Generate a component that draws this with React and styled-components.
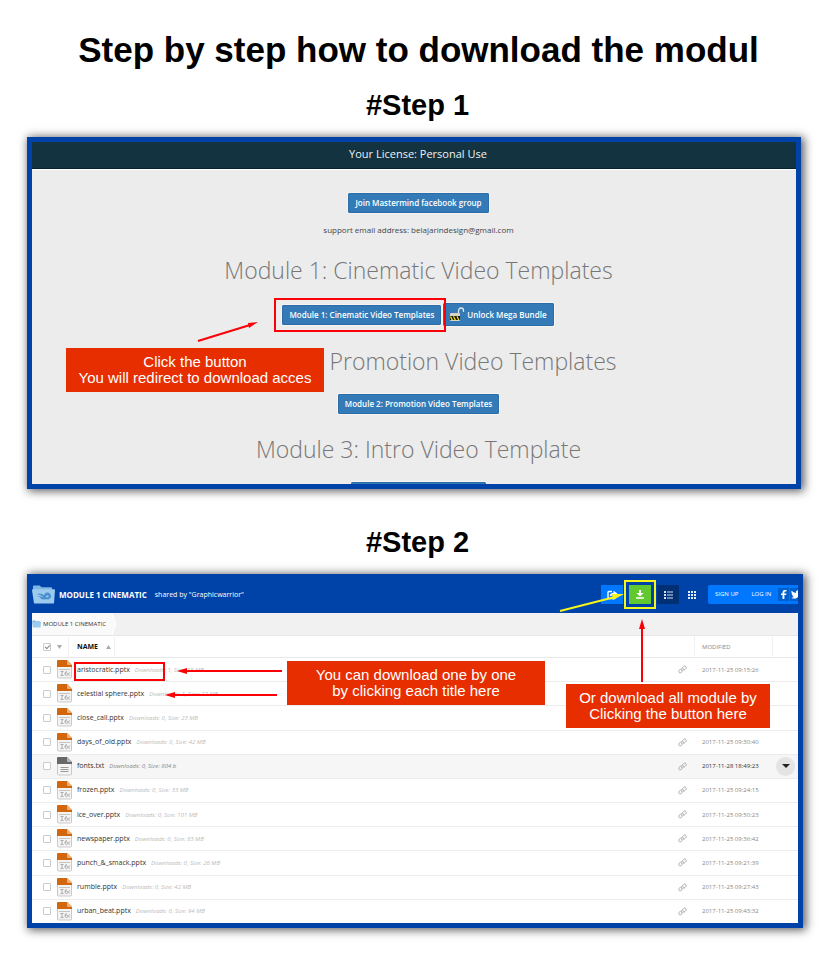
import React from "react";
import styled, { createGlobalStyle } from "styled-components";

const GlobalStyle = createGlobalStyle`
  * { box-sizing: border-box; }
  body { margin: 0; background: #fff; }
  button { font: inherit; color: inherit; border: 0; padding: 0; background: none; cursor: pointer; }
  a { color: inherit; text-decoration: none; }
`;

const sans = `"Open Sans", "Noto Sans", sans-serif`;
const arial = `"Liberation Sans", Arial, sans-serif`;

const Page = styled.main`
  padding: 26px 26px 31px 27px;
  font-family: ${arial};
  color: #000;
`;

const Title = styled.h1`
  margin: 0 0 0 7px;
  font-size: 35px;
  line-height: 48px;
  font-weight: 700;
  text-align: center;
`;

const StepTitle = styled.h2`
  margin: ${(p) => p.$top}px 0 ${(p) => p.$bottom}px 5px;
  font-size: 29px;
  line-height: 34px;
  font-weight: 700;
  text-align: center;
`;

const Frame = styled.section`
  position: relative;
  margin-right: ${(p) => p.$inset || 0}px;
  border: 5px solid #0043a8;
  background: ${(p) => p.$bg};
  box-shadow: 2px 1px 9px 1px rgba(0, 0, 0, 0.65);
  font-family: ${sans};
`;

/* ---------- step 1 ---------- */

const Screen = styled.div`
  height: 342px;
  overflow: hidden;
`;

const LicenseBar = styled.header`
  height: 28px;
  padding-left: 8px;
  background: #133340;
  border-bottom: 1px solid #fff;
  box-shadow: inset 0 -1px 0 #08222d;
  color: #eef2f4;
  font-size: 11px;
  line-height: 24px;
  text-align: center;
`;

const Modules = styled.div`
  display: flex;
  flex-direction: column;
  align-items: center;
  padding: 23px 0 0 9px;
`;

const BlueButton = styled.button`
  display: flex;
  align-items: center;
  gap: 2px;
  height: ${(p) => (p.$tall ? 23 : 20)}px;
  padding: 0 7px;
  border-radius: 2px;
  background: #337ab7;
  box-shadow: inset 0 0 0 1px #2a6da8, 0 0 0 1px #f6f3f0;
  color: #fff;
  font-size: 8px;
  font-weight: 600;
  line-height: 20px;
  white-space: nowrap;
`;

const Support = styled.p`
  margin: 8px 0 0;
  color: #444;
  font-size: 8px;
  line-height: 18px;
`;

const ModuleTitle = styled.h3`
  margin: ${(p) => p.$top}px 0 ${(p) => p.$bottom}px;
  color: #777;
  font-size: 23px;
  font-weight: 300;
  line-height: 32px;
  white-space: nowrap;
`;

const ButtonRow = styled.div`
  display: flex;
  align-items: center;
  margin-right: 9px;
`;

const Highlight = styled.span`
  z-index: 1;
  margin: -6px -3px -6px 0;
  padding: 5px 3px 5px 6px;
  border: 2px solid #fb0007;
`;

/* ---------- annotations ---------- */

const Callout = styled.p`
  position: absolute;
  top: ${(p) => p.$top}px;
  left: ${(p) => (p.$left === undefined ? "auto" : `${p.$left}px`)};
  right: ${(p) => (p.$right === undefined ? "auto" : `${p.$right}px`)};
  width: ${(p) => p.$width}px;
  margin: 0;
  padding: 6px 0;
  background: #e72e00;
  color: #fff;
  font-family: ${arial};
  font-size: 15px;
  line-height: 16px;
  text-align: center;
  white-space: nowrap;
`;

const Arrow = styled.svg`
  position: absolute;
  top: ${(p) => p.$top}px;
  left: ${(p) => (p.$left === undefined ? "auto" : `${p.$left}px`)};
  right: ${(p) => (p.$right === undefined ? "auto" : `${p.$right}px`)};
  pointer-events: none;
`;

/* ---------- step 2 ---------- */

const FileScreen = styled.div`
  height: 344px;
  overflow: hidden;
`;

const TopBar = styled.header`
  display: flex;
  align-items: center;
  height: 34px;
  padding-bottom: 3px;
  overflow: hidden;
  background: #0043a8;
  color: #fff;
`;

const FolderName = styled.h3`
  margin: 0 8px 0 4px;
  font-size: 8px;
  font-weight: 700;
  line-height: 16px;
  white-space: nowrap;
`;

const SharedBy = styled.span`
  flex: 1;
  font-size: 7px;
  line-height: 16px;
  white-space: nowrap;
`;

const Tool = styled.button`
  display: grid;
  place-items: center;
  flex: none;
  width: 22px;
  height: 19px;
  margin-right: ${(p) => p.$gap || 0}px;
  background: ${(p) => p.$bg || "transparent"};
  outline: ${(p) => (p.$marked ? "2px solid #f8f51c" : "none")};
  outline-offset: 3px;
`;

const Account = styled.div`
  display: flex;
  align-items: center;
  flex: none;
  width: 90px;
  height: 19px;
  padding-left: 7px;
  overflow: hidden;
  border-radius: 2px 0 0 2px;
  background: #0077ff;
  font-size: 6px;
  line-height: 19px;
  white-space: nowrap;
`;

const AccountLink = styled.a`
  flex: none;
  margin-right: ${(p) => p.$gap}px;
`;

const Social = styled.a`
  display: grid;
  place-items: center;
  flex: none;
  width: 11px;
  height: 13px;
  margin-right: 1px;
  background: #005fcc;
`;

const Breadcrumb = styled.nav`
  display: flex;
  height: 23px;
  background: #f1f1f1;
  border-bottom: 1px solid #e6e6e6;
`;

const Crumb = styled.a`
  display: flex;
  align-items: center;
  gap: 2px;
  padding-right: 6px;
  background: #fafafa;
  color: #333;
  font-size: 6px;
`;

const FileTable = styled.table`
  width: 100%;
  height: 288px;
  table-layout: fixed;
  border-collapse: separate;
  border-spacing: 0;
  color: #444;
`;

const Col = styled.col`
  width: ${(p) => (p.$w ? `${p.$w}px` : "auto")};
`;

const HeadCell = styled.th`
  height: 22px;
  padding: 0 0 0 ${(p) => p.$pad || 0}px;
  border-bottom: 1px solid #e8e8e8;
  border-left: ${(p) => (p.$line ? "1px solid #f1f1f1" : "none")};
  color: #888;
  font-size: 6px;
  font-weight: 400;
  line-height: 10px;
  text-align: left;
`;

const NameHead = styled.div`
  display: flex;
  align-items: center;
  height: 20px;
`;

const NameSort = styled.button`
  display: flex;
  align-items: center;
  gap: 8px;
  height: 20px;
  margin-left: 6px;
  padding: 0 3px 0 8px;
  border: solid #f1f1f1;
  border-width: 0 1px;
  color: #111;
  font-size: 7px;
  font-weight: 700;
`;

const Row = styled.tr`
  background: ${(p) => (p.$active ? "#f6f6f6" : "#fff")};
`;

const Cell = styled.td`
  padding: 0 0 0 ${(p) => p.$pad || 0}px;
  border-bottom: 1px solid #ececec;
  color: ${(p) => (p.$active ? "#333" : "#888")};
  font-size: 6px;
  line-height: 10px;
  white-space: nowrap;
  vertical-align: middle;
`;

const Tick = styled.input`
  display: grid;
  place-items: center;
  appearance: none;
  width: 8px;
  height: 8px;
  margin: 0;
  border: 1px solid #c8cbd0;
  border-radius: 1px;
  background: #fff;
  &:checked::before {
    content: "";
    width: 4px;
    height: 2px;
    border: solid #888;
    border-width: 0 0 1px 1px;
    transform: rotate(-45deg);
  }
`;

const FileCell = styled.div`
  display: flex;
  align-items: center;
  height: 22px;
`;

const FileName = styled.a`
  margin: 0 5px;
  color: #333;
  font-size: 7px;
  line-height: 12px;
`;

const Meta = styled.em`
  color: ${(p) => (p.$active ? "#888" : "#bbb")};
  font-size: 6px;
  line-height: 12px;
`;

const MenuButton = styled.button`
  display: grid;
  place-items: center;
  width: 19px;
  height: 19px;
  border-radius: 50%;
  background: #e4e4e4;
`;

const Glyph = styled.svg`
  display: block;
  flex: none;
`;

const LockIcon = () => (
  <Glyph width="15" height="17" viewBox="0 0 15 17" aria-hidden="true">
    <path d="M8.500 8V5.500Q8.500 2 11 2t2.500 2.500V6" fill="none" stroke="#dfe6ea" strokeWidth="1.300" />
    <rect x="0" y="7" width="10" height="8" rx="1" fill="#d8d3c4" />
    <rect x="0" y="10" width="10" height="4" fill="#151508" />
    <path d="M1 10l2 4H1.500L0 11zM4 10l2 4H4.500L3 10.500zM7.500 10l2 4H8L6.500 10.500z" fill="#f5df1f" />
  </Glyph>
);

const FolderIcon = ({ logo, width, height }) => (
  <Glyph width={width} height={height} viewBox="0 0 24 21" aria-hidden="true">
    <path d="M1 4V2q0-1 1-1h6l2 2h10q1 0 1 1v2H1z" fill="#7fb5e2" />
    <path d="M0 6q0-1 1-1h22q1 0 1 1l-1 13q0 1-1 1H3q-1 0-1-1z" fill="#9ccbee" />
    {logo && (
      <path
        d="M5 10.500c3-2 5-.5 7 .5 1.500.7 1-2.500 4-2.500 2.500 0 4 2 3.800 4S17.500 16 15.500 15.500c-2-.5-2.500.5-4.500 0s-2-2.500-5-3c3-.5 4 1 6 .8-2-1-3-3-7-2.800zM15.500 11.500c-1.500.3-1 2 0 2s2-.5 2-1.200-1-1-2-.8z"
        fill="#4a90cf"
        fillRule="evenodd"
      />
    )}
  </Glyph>
);

const FileIcon = ({ type }) => {
  const text = type === "txt";
  return (
    <Glyph width="15" height="19" viewBox="0 0 15 19" aria-hidden="true">
      <path d="M1 1h9l4.500 4.500V17q0 1-1 1h-12q-1 0-1-1V1.500z" fill="#f4f4f4" stroke="#c9c9c9" />
      <path d="M0 1q0-1 1-1h9l5 5v2H0z" fill={text ? "#686868" : "#d2660c"} />
      <path d="M10 0l5 5h-4q-1 0-1-1z" fill={text ? "#b5b5b5" : "#f4ad70"} />
      {text ? (
        <path d="M3.500 10.500h8M3.500 12.500h8M3.500 14.500h8" stroke="#999" />
      ) : (
        <>
          <path d="M2 9.500h11" stroke="#c4c4c4" />
          <path d="M3.500 11.500h3M5 11.500v4M3.500 15.500h3M10 11.500q-2 0-2 2t1.500 2 1.500-1.200-1.300-1.300-1.700 1M12.500 12.500l-1 1.500 1 1.500" fill="none" stroke="#adadad" />
        </>
      )}
    </Glyph>
  );
};

const LinkIcon = () => (
  <Glyph width="9" height="9" viewBox="0 0 9 9" fill="none" stroke="#aaa" strokeLinecap="round" aria-hidden="true">
    <path d="M3.500 5.500C2.500 4.500 4 3.500 5 2.200S7 .8 7.800 1.500s.4 2-.6 2.800l-1 .8" />
    <path d="M5 3.500c1 1 .2 2-1 3.200S2 8.200 1.200 7.500s-.4-2 .6-2.800l.8-.8" />
  </Glyph>
);

const Triangle = ({ up, color = "#aaa", size = 5 }) => (
  <Glyph width={size} height="4" viewBox="0 0 8 6" preserveAspectRatio="none" aria-hidden="true">
    <path d={up ? "M0 6h8L4 0z" : "M0 0h8L4 6z"} fill={color} />
  </Glyph>
);

const ShareIcon = () => (
  <Glyph width="11" height="10" viewBox="0 0 11 10" fill="none" aria-hidden="true">
    <path d="M5 1.500H2Q1 1.500 1 2.500v5q0 1 1 1h5.500q1 0 1-1V7" stroke="#fff" strokeWidth="1.400" />
    <path d="M3.500 6Q4 3.500 7 3.500" stroke="#fff" strokeWidth="1.600" />
    <path d="M6.500.8L10.500 3.500 6.500 6.200z" fill="#fff" />
  </Glyph>
);

const DownloadIcon = () => (
  <Glyph width="8" height="9" viewBox="0 0 8 9" fill="#fff" aria-hidden="true">
    <path d="M3 0h2v3h2.500L4 6.500.5 3H3zM0 7.200h8v1.500H0z" />
  </Glyph>
);

const ListIcon = () => (
  <Glyph width="9" height="8" viewBox="0 0 9 8" fill="#d5dfed" aria-hidden="true">
    <path d="M0 0h2v2H0zM3 .5h6v1H3zM0 3h2v2H0zM3 3.500h6v1H3zM0 6h2v2H0zM3 6.500h6v1H3z" />
  </Glyph>
);

const GridIcon = () => (
  <Glyph width="8" height="8" viewBox="0 0 8 8" fill="#e5ecf6" aria-hidden="true">
    <path d="M0 0h2v2H0zM3 0h2v2H3zM6 0h2v2H6zM0 3h2v2H0zM3 3h2v2H3zM6 3h2v2H6zM0 6h2v2H0zM3 6h2v2H3zM6 6h2v2H6z" />
  </Glyph>
);

const FacebookIcon = () => (
  <Glyph width="6" height="9" viewBox="0 0 6 9" aria-hidden="true">
    <path d="M1.500 9V5H0V3.400h1.500V2.300Q1.500 0 3.800 0H5.500v1.600H4.300q-.9 0-.9.9v.9h2L5.200 5H3.400v4z" fill="#fff" />
  </Glyph>
);

const TwitterIcon = () => (
  <Glyph width="10" height="9" viewBox="0 0 24 20" aria-hidden="true">
    <path
      d="M24 2.400a10 10 0 0 1-2.800.8A5 5 0 0 0 23.300.5a10 10 0 0 1-3.100 1.200 4.900 4.900 0 0 0-8.400 4.500A14 14 0 0 1 1.700 1.100a4.900 4.900 0 0 0 1.500 6.600A4.900 4.900 0 0 1 1 7.100a4.900 4.900 0 0 0 3.900 4.900 5 5 0 0 1-2.200.1 4.900 4.900 0 0 0 4.600 3.400A10 10 0 0 1 0 17.500 14 14 0 0 0 21.500 5 10 10 0 0 0 24 2.400z"
      fill="#fff"
    />
  </Glyph>
);

const files = [
  ["aristocratic.pptx", "Downloads: 1, Size: 15 MB", "2017-11-25 09:15:26"],
  ["celestial sphere.pptx", "Downloads: 1, Size: 17 MB", ""],
  ["close_call.pptx", "Downloads: 0, Size: 23 MB", ""],
  ["days_of_old.pptx", "Downloads: 0, Size: 42 MB", "2017-11-25 09:30:40"],
  ["fonts.txt", "Downloads: 0, Size: 804 b", "2017-11-28 18:49:23"],
  ["frozen.pptx", "Downloads: 0, Size: 33 MB", "2017-11-25 09:24:15"],
  ["ice_over.pptx", "Downloads: 0, Size: 101 MB", "2017-11-25 09:50:23"],
  ["newspaper.pptx", "Downloads: 0, Size: 83 MB", "2017-11-25 09:36:42"],
  ["punch_&_smack.pptx", "Downloads: 0, Size: 26 MB", "2017-11-25 09:21:39"],
  ["rumble.pptx", "Downloads: 0, Size: 42 MB", "2017-11-25 09:27:43"],
  ["urban_beat.pptx", "Downloads: 0, Size: 94 MB", "2017-11-25 09:43:32"],
];

const FileBox = styled.div`
  position: absolute;
  top: 83px;
  left: 42px;
  width: 91px;
  height: 19px;
  border: 2px solid #fb0007;
  pointer-events: none;
`;

const FileRow = ({ name, meta, date }) => {
  const type = name.split(".").pop();
  const active = type === "txt";
  return (
    <Row $active={active}>
      <Cell $pad={11}>
        <Tick type="checkbox" aria-label={`Select ${name}`} />
      </Cell>
      <Cell>
        <FileCell>
          <FileIcon type={type} />
          <FileName href="#">{name}</FileName>
          <Meta $active={active}>{meta}</Meta>
        </FileCell>
      </Cell>
      <Cell>
        <LinkIcon />
      </Cell>
      <Cell $pad={8} $active={active}>{date}</Cell>
      <Cell $pad={4}>
        {active && (
          <MenuButton aria-label={`Menu for ${name}`}>
            <Triangle color="#222" size={8} />
          </MenuButton>
        )}
      </Cell>
    </Row>
  );
};

export default function App() {
  return (
    <Page>
      <GlobalStyle />
      <Title>Step by step how to download the modul</Title>

      <StepTitle $top={14} $bottom={15}>#Step 1</StepTitle>
      <Frame $inset={2} $bg="#ececec">
        <Screen>
          <LicenseBar>Your License: Personal Use</LicenseBar>
          <Modules>
            <BlueButton>Join Mastermind facebook group</BlueButton>
            <Support>support email address: belajarindesign@gmail.com</Support>
            <ModuleTitle $top={15} $bottom={17}>Module 1: Cinematic Video Templates</ModuleTitle>
            <ButtonRow>
              <Highlight>
                <BlueButton>Module 1: Cinematic Video Templates</BlueButton>
              </Highlight>
              <BlueButton $tall>
                <LockIcon />
                Unlock Mega Bundle
              </BlueButton>
            </ButtonRow>
            <ModuleTitle $top={19} $bottom={17}>Module 2: Promotion Video Templates</ModuleTitle>
            <BlueButton>Module 2: Promotion Video Templates</BlueButton>
            <ModuleTitle $top={19} $bottom={17}>Module 3: Intro Video Template</ModuleTitle>
            <BlueButton>Module 3: Intro Video Template</BlueButton>
          </Modules>
        </Screen>
        <Callout $top={206} $left={34} $width={258}>
          Click the button
          <br />
          You will redirect to download acces
        </Callout>
        <Arrow $top={178} $left={164} width="64" height="24" viewBox="0 0 64 24">
          <path d="M2 21L54 5" stroke="#fb0007" strokeWidth="2" />
          <path d="M62 2L53 8 52 3z" fill="#fb0007" />
        </Arrow>
      </Frame>

      <StepTitle $top={36} $bottom={15}>#Step 2</StepTitle>
      <Frame $bg="#fff">
        <FileScreen>
          <TopBar>
            <FolderIcon logo width={23} height={21} />
            <FolderName>MODULE 1 CINEMATIC</FolderName>
            <SharedBy>shared by "Graphicwarrior"</SharedBy>
            <Tool $bg="#0077ff" $gap={6} aria-label="Share"><ShareIcon /></Tool>
            <Tool $bg="#61c82f" $gap={6} $marked aria-label="Download"><DownloadIcon /></Tool>
            <Tool $bg="#002f74" $gap={2} aria-label="List view"><ListIcon /></Tool>
            <Tool $gap={5} aria-label="Grid view"><GridIcon /></Tool>
            <Account>
              <AccountLink href="#" $gap={13}>SIGN UP</AccountLink>
              <AccountLink href="#" $gap={7}>LOG IN</AccountLink>
              <Social href="#" aria-label="Facebook"><FacebookIcon /></Social>
              <Social href="#" aria-label="Twitter"><TwitterIcon /></Social>
            </Account>
          </TopBar>
          <Breadcrumb>
            <Crumb href="#">
              <FolderIcon width={9} height={8} />
              MODULE 1 CINEMATIC
            </Crumb>
            <Glyph width="5" height="22" viewBox="0 0 5 22" aria-hidden="true">
              <path d="M0 0l4 11-4 11z" fill="#fafafa" />
              <path d="M0 0l4 11-4 11" fill="none" stroke="#fff" />
            </Glyph>
          </Breadcrumb>
          <FileTable>
            <colgroup>
              <Col $w={25} />
              <Col />
              <Col $w={16} />
              <Col $w={78} />
              <Col $w={26} />
            </colgroup>
            <thead>
              <tr>
                <HeadCell $pad={11}>
                  <Tick type="checkbox" defaultChecked aria-label="Select all" />
                </HeadCell>
                <HeadCell>
                  <NameHead>
                    <Triangle />
                    <NameSort>NAME <Triangle up /></NameSort>
                  </NameHead>
                </HeadCell>
                <HeadCell />
                <HeadCell $pad={7} $line>MODIFIED</HeadCell>
                <HeadCell $line />
              </tr>
            </thead>
            <tbody>
              {files.map(([name, meta, date]) => (
                <FileRow key={name} name={name} meta={meta} date={date} />
              ))}
            </tbody>
          </FileTable>
        </FileScreen>
        <FileBox />
        <Callout $top={82} $left={255} $width={258}>
          You can download one by one
          <br />
          by clicking each title here
        </Callout>
        <Callout $top={105} $right={28} $width={204}>
          Or download all module by
          <br />
          Clicking the button here
        </Callout>
        <Arrow $top={88} $left={145} width="106" height="8" viewBox="0 0 106 8">
          <path d="M8 4h97" stroke="#fb0007" strokeWidth="2" />
          <path d="M0 4l10-3v6z" fill="#fb0007" />
        </Arrow>
        <Arrow $top={112} $left={133} width="113" height="8" viewBox="0 0 113 8">
          <path d="M8 4h104" stroke="#fb0007" strokeWidth="2" />
          <path d="M0 4l10-3v6z" fill="#fb0007" />
        </Arrow>
        <Arrow $top={40} $right={152} width="8" height="64" viewBox="0 0 8 64">
          <path d="M4 8v55" stroke="#fb0007" strokeWidth="2" />
          <path d="M4 0L1 10h6z" fill="#fb0007" />
        </Arrow>
        <Arrow $top={14} $right={173} width="66" height="20" viewBox="0 0 66 20">
          <path d="M1 18L56 4" stroke="#f8f51c" strokeWidth="2" />
          <path d="M65 1L54 7 53 1z" fill="#f8f51c" />
        </Arrow>
      </Frame>
    </Page>
  );
}
